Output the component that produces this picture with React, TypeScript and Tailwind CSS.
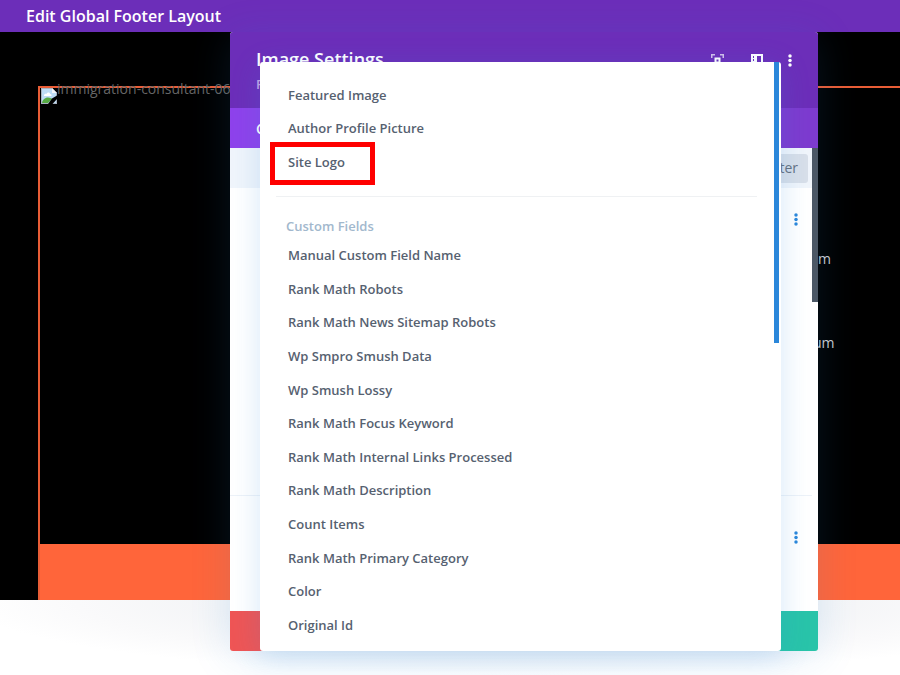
import React from 'react';

const basicItems = ['Featured Image', 'Author Profile Picture', 'Site Logo'];

const customFields = [
  'Manual Custom Field Name',
  'Rank Math Robots',
  'Rank Math News Sitemap Robots',
  'Wp Smpro Smush Data',
  'Wp Smush Lossy',
  'Rank Math Focus Keyword',
  'Rank Math Internal Links Processed',
  'Rank Math Description',
  'Count Items',
  'Rank Math Primary Category',
  'Color',
  'Original Id',
];

function Dots({ className }: { className: string }) {
  return (
    <svg className={className} width="4" height="13" viewBox="0 0 4 13" fill="currentColor">
      <circle cx="2" cy="2" r="1.75" />
      <circle cx="2" cy="6.5" r="1.75" />
      <circle cx="2" cy="11" r="1.75" />
    </svg>
  );
}

function BrokenImage() {
  return (
    <svg width="16" height="16" viewBox="0 0 16 16" className="ml-px shrink-0">
      <path d="M0 0h11l5 5v11H0z" fill="#c5d9ee" />
      <path d="M1 1h10v4h4v10H1z" fill="#bddcf4" />
      <path d="M3 7.5c0-2 2-2 2.5-1.500C6 4 9 4 9 6c2 0 2 2 1 2H3z" fill="#fff" />
      <path d="M1 15c0-3 3-5.500 6-5.500 2 0 3.500 1 4 1.500L7 15z" fill="#56aa43" />
      <path d="M11 0v5h5z" fill="#f4f6f8" />
      <path d="M0 .5h11M.5 0v16M0 15.500h16M15.500 5v11" fill="none" stroke="#a9b3c0" />
      <path d="M16 7.500 11 10.500 7 16h4.500L16 11z" fill="#000" />
    </svg>
  );
}

function Page() {
  return (
    <div className="flex h-[568px] bg-black pl-[38px]">
      <div className="mt-[54px] flex flex-1 flex-col border-l-2 border-t-2 border-[#e95d36]">
        <div className="flex h-[456px] justify-between">
          <div className="flex h-5">
            <BrokenImage />
            <span className="-mt-[9px] text-[14px] leading-5 whitespace-nowrap text-[#666]">immigration-consultant-06</span>
          </div>
          <div className="flex w-[82px] flex-col pt-[159px] text-[14px] leading-6 text-[#c9cbd0]">
            <span className="h-[84px]">m</span>
            <span className="-ml-[5px]">um</span>
          </div>
        </div>
        <div className="flex-1 bg-[#ff653a]" />
      </div>
    </div>
  );
}

function Modal() {
  return (
    <div className="absolute left-[230.490px] top-8 flex h-[619px] w-[587.510px] flex-col rounded-[3px] bg-white shadow-[0_5px_40px_rgba(43,135,218,0.15)]">
      <div className="flex h-[76px] shrink-0 justify-between rounded-t-[3px] bg-[#6c2eb9] pl-[25.500px] pr-[26px] text-white">
        <div className="pt-[15px]">
          <div className="text-[18px] leading-6 font-semibold">Image Settings</div>
          <div className="mt-[4px] text-[13px] leading-[18px] font-semibold text-[#c3a5e5]">Preset: Default</div>
        </div>
        <div className="flex items-start pt-[22px]">
          <svg width="13" height="13" viewBox="0 0 13 13" fill="none" stroke="currentColor" strokeWidth="1.5">
            <path d="M.75 4V.75H4M9 .75h3.250V4M.75 9v3.250H4M9 12.250h3.250V9" strokeOpacity=".7" />
            <rect x="4.500" y="4.500" width="4" height="4" strokeWidth="2" />
          </svg>
          <svg className="ml-[27px]" width="12" height="12" viewBox="0 0 12 12">
            <path d="M0 0h12v12H0z" fill="#fff" />
            <path d="M6 2h4v8H6zM2 2h1v2H2zM2 5h1v2H2zM2 8h1v2H2z" fill="#6c2eb9" />
          </svg>
          <Dots className="ml-[25px]" />
        </div>
      </div>
      <div className="flex h-10 shrink-0 items-center bg-[linear-gradient(90deg,#8e42eb_50%,#7d3bcf_50%)] pl-[25.500px] text-[14px] font-semibold text-white">Content</div>
      <div className="flex min-h-0 flex-1">
        <div className="flex flex-1 flex-col">
          <div className="flex h-10 shrink-0 items-center justify-end bg-[#f0f5fb] pr-1">
            <div className="flex h-[29px] items-center rounded-[3px] bg-[#d8dfe9] pb-px pl-3 pr-[10px] text-[14px] text-[#657180]">+ Filter</div>
          </div>
          <div className="flex h-[308px] shrink-0 justify-end border-b border-[#edf2f8] pr-[14px] pt-[25px]">
            <Dots className="text-[#2b87da]" />
          </div>
          <div className="flex justify-end pr-[14px] pt-[35px]">
            <Dots className="text-[#2b87da]" />
          </div>
        </div>
        <div className="w-[6px] bg-white">
          <div className="h-[154px] bg-[#4c5866]" />
        </div>
      </div>
      <div className="flex h-10 shrink-0 overflow-hidden rounded-b-[3px]">
        <div className="flex-1 bg-[#ef5555]" />
        <div className="flex-1 bg-[#7d3bcf]" />
        <div className="flex-1 bg-[#2b87da]" />
        <div className="flex-1 bg-[#29c4a9]" />
      </div>
    </div>
  );
}

function MenuItem({ label, selected = false }: { label: string; selected?: boolean }) {
  return (
    <div className="relative flex h-[33.610px] items-center pl-7 whitespace-nowrap">
      {label}
      {selected && <div className="absolute -top-[4.500px] left-[9.500px] h-[43.500px] w-[105px] border-[5px] border-[#ff0000]" />}
    </div>
  );
}

function DynamicContentMenu() {
  return (
    <div className="absolute left-[260px] top-[62px] flex h-[589px] w-[521px] justify-between rounded-[3px] bg-white pr-[2px] shadow-[0_5px_30px_rgba(43,135,218,0.2)]">
      <div className="flex-1 overflow-hidden pt-[16.800px] text-[13px] font-semibold text-[#566170]">
        {basicItems.map((label) => (
          <MenuItem key={label} label={label} selected={label === 'Site Logo'} />
        ))}
        <div className="mt-[16px] ml-4 mr-[17px] border-t border-[#eff1f3]" />
        <div className="mt-[18px] h-[22px] pl-[26px] leading-[22px] text-[#a2b8cd]">Custom Fields</div>
        <div className="mt-[2.400px]">
          {customFields.map((label) => (
            <MenuItem key={label} label={label} />
          ))}
        </div>
      </div>
      <div className="h-[280.500px] w-[5px] bg-[#2b87da]" />
    </div>
  );
}

export default function App() {
  return (
    <div className="relative h-[675px] w-[900px] overflow-hidden bg-white font-['Open_Sans','Noto_Sans',sans-serif]">
      <header className="flex h-8 items-center bg-[#6c2eb9] pl-[26px] text-[16px] font-semibold text-white">Edit Global Footer Layout</header>
      <Page />
      <div className="h-[75px] bg-[radial-gradient(560px_75px_at_524px_0px,#f2f3f6_0%,#f4f5f7_55%,#fafafb_80%,#ffffff_100%)]" />
      <Modal />
      <DynamicContentMenu />
    </div>
  );
}
